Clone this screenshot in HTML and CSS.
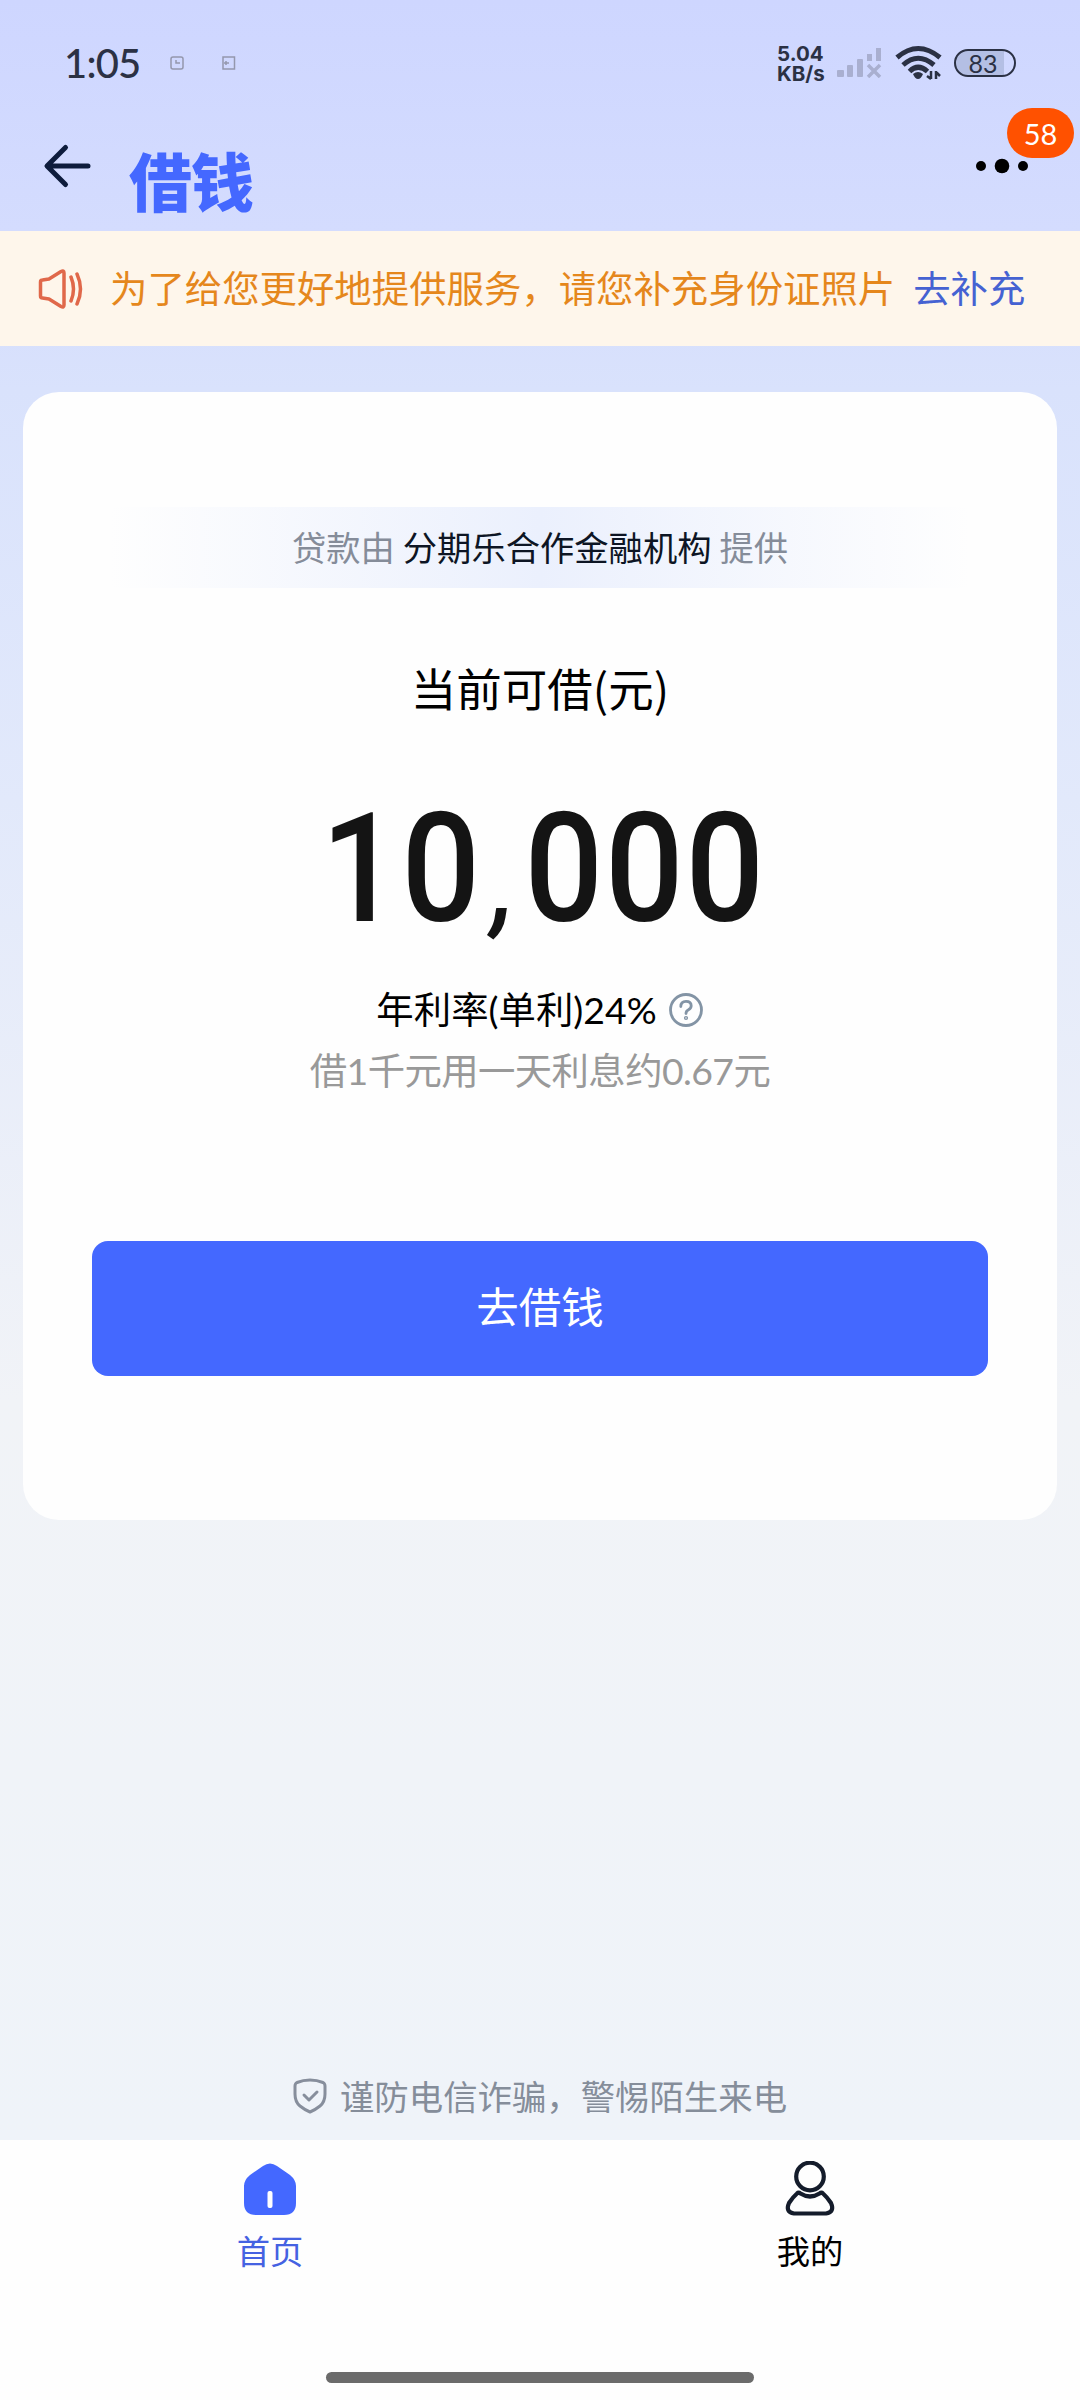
FILE: index.html
```html
<!DOCTYPE html>
<html lang="zh-CN">
<head>
<meta charset="utf-8">
<title>借钱</title>
<link rel="stylesheet" href="styles.css">
</head>
<body>
<div class="screen">
  <div class="statusbar">
    <span class="clock">1:05</span>
    <svg class="tiny" width="14" height="14" viewBox="0 0 14 14" fill="none" stroke="#9497ad" stroke-width="1.5"><rect x="1" y="1" width="12" height="12" rx="2"/><path d="M6 4v3h4"/></svg>
    <svg class="tiny tiny-two" width="14" height="14" viewBox="0 0 14 14" fill="none" stroke="#9497ad" stroke-width="1.5"><path d="M1 1h11.500v12H1zM2 7h5M4 5v4"/></svg>
    <div class="status-right">
      <div class="speed"><span>5.04</span><span>KB/s</span></div>
      <svg class="signal" width="46" height="30" viewBox="0 0 46 30" fill="#a9afd0"><rect y="22" width="7" height="7" rx="1"/><rect x="10" y="17" width="6" height="12" rx="1"/><rect x="20" y="11" width="6" height="18" rx="1"/><rect x="30" y="6" width="5" height="7"/><rect x="39" width="5" height="13"/><path d="M31 17L43 29M43 17L31 29" stroke="#a9afd0" stroke-width="3.500"/></svg>
      <svg class="wifi" width="48" height="36" viewBox="0 0 48 36" fill="none" stroke="#2b3144" stroke-width="5"><path d="M2 12.500Q23 -5.500 45 12.500"/><path d="M8 20Q23 6.500 39 20"/><path d="M14.500 26.500Q23 18 32.500 26.500"/><path d="M18 29Q23 25 28 29Q26 34 23 34Q20 34 18 29Z" fill="#2b3144" stroke="none"/><path d="M36 26v8M32 31l4 3M41 34v-8M41 27l4 4" stroke-width="2.500"/></svg>
      <div class="battery"><span>83</span></div>
    </div>
  </div>
  <header class="navbar">
    <svg class="back" width="50" height="46" viewBox="0 0 50 46" fill="none" stroke="#0e1c3c" stroke-width="5" stroke-linecap="round" stroke-linejoin="round"><path d="M23.500 4.500L5 23L23.500 41.500M6 23H46"/></svg>
    <h1>借钱</h1>
    <div class="more">
      <svg width="54" height="16" viewBox="0 0 54 16"><circle cx="6" cy="8" r="5"/><circle cx="27" cy="8" r="7.300"/><circle cx="48" cy="8" r="5"/></svg>
      <span class="badge">58</span>
    </div>
  </header>
  <div class="notice">
    <svg width="46" height="42" viewBox="0 0 46 42" fill="none" stroke="#e0684a" stroke-width="3.500" stroke-linecap="round" stroke-linejoin="round"><path d="M3.500 14Q3.500 12 5.500 12L12 11L24 3.500Q27 2 27 5V37Q27 40 24 38.500L12 31L5.500 30Q3.500 30 3.500 28Z"/><path d="M34 9Q39 21 34 33M40 6Q47 21 40 36"/></svg>
    <span class="notice-text">为了给您更好地提供服务，请您补充身份证照片</span>
    <a class="notice-link">去补充</a>
  </div>
  <main class="card">
    <p class="provider">贷款由<b>分期乐合作金融机构</b>提供</p>
    <h2>当前可借(元)</h2>
    <div class="amount"><span class="digits">10<i>,</i>000</span></div>
    <div class="rate"><span>年利率(单利)24%</span>
      <svg width="36" height="36" viewBox="0 0 36 36" fill="none" stroke="#8394a5" stroke-width="2.800" stroke-linecap="round"><circle cx="18" cy="18" r="15.500"/><path d="M12.800 14.500Q12.800 9.300 18 9.300Q23.200 9.300 23.200 13.800Q23.200 16.300 20.500 17.700Q18 19 18 21.500"/><circle cx="18" cy="26" r=".7"/></svg>
    </div>
    <p class="interest">借1千元用一天利息约0.67元</p>
    <button class="borrow">去借钱</button>
  </main>
  <p class="safety">
    <svg width="34" height="36" viewBox="0 0 34 36" fill="none" stroke="#878e9c" stroke-width="3" stroke-linecap="round" stroke-linejoin="round"><path d="M17 2Q24 2 30 4.500Q32 5.500 32 8V16Q32 24 27 28Q22 32 17 34Q12 32 7 28Q2 24 2 16V8Q2 5.500 4 4.500Q10 2 17 2Z"/><path d="M11 17L16 22L24 14"/></svg>
    <span>谨防电信诈骗，警惕陌生来电</span>
  </p>
  <nav class="tabs">
    <a class="tab active">
      <svg width="54" height="56" viewBox="0 0 54 56"><path d="M20 5Q27 0 34 5L47 14Q53 19 53 25V42Q53 54 41 54H13Q1 54 1 42V25Q1 19 7 14Z" fill="#4468ff"/><rect x="24.500" y="30" width="5" height="17" rx="2" fill="#fff"/></svg>
      <span>首页</span>
    </a>
    <a class="tab">
      <svg width="54" height="56" viewBox="0 0 54 56" fill="none" stroke="#141c2b" stroke-width="4.200" stroke-linejoin="round"><circle cx="27" cy="15.500" r="13.800"/><path d="M14 32.500Q15.500 31 17.500 32.500Q27 38.500 36.500 32.500Q38.500 31 40 32.500Q44 36 48 42Q52 51 43 52.500H11Q2 51 6 42Q10 36 14 32.500Z"/></svg>
      <span>我的</span>
    </a>
  </nav>
  <div class="homebar"><div class="handle"></div></div>
</div>
</body>
</html>
```
FILE: styles.css
```css
* { box-sizing: border-box; margin: 0; padding: 0; }
body { width: 1080px; font-family: "Noto Sans CJK SC", sans-serif; color: #000; }
.screen {
  width: 1080px; height: 2400px; display: flex; flex-direction: column;
  background: linear-gradient(180deg, #ced6ff 0, #d4dcfe 230px, #d9e2fc 390px, #e2e9fb 800px, #f1f3f7 1400px, #eff3f9 2140px);
}
.statusbar { height: 108px; padding: 18px 64px 0 64px; display: flex; align-items: center; color: #2b3144; }
.clock { font: 500 40px/48px Lato, sans-serif; letter-spacing: -.8px; width: 106px; white-space: nowrap; }
.tiny-two { margin-left: 38px; }
.status-right { margin-left: auto; display: flex; align-items: center; }
.speed { display: flex; flex-direction: column; font: 700 20.500px/20.500px Inter, sans-serif; width: 60px; padding-top: 2px; }
.signal { margin-right: 12px; }
.wifi { margin-right: 11px; }
.battery { width: 62px; height: 28px; border: 2.5px solid #2b3144; border-radius: 14px; background: linear-gradient(90deg, #b4bfe4 83%, transparent 83%); text-align: center; font: 400 25px/24px Lato, sans-serif; padding-right: 4px; }
.navbar { height: 123px; display: flex; padding: 0 51px 0 42px; }
.back { margin-top: 35px; }
.navbar h1 { margin-left: 37px; font-size: 63px; line-height: 80px; font-weight: 900; color: #4468ff; padding-top: 31px; letter-spacing: -1px; }
.more { position: relative; margin-left: auto; padding-top: 50px; height: 80px; }
.more svg { display: block; }
.badge { position: absolute; left: 32px; top: 0; width: 67px; height: 50px; border-radius: 25px; background: #ff5100; color: #fff; font: 400 29px/52px Lato, sans-serif; text-align: center; }
.notice { height: 115px; background: #fef6eb; display: flex; align-items: center; padding-left: 37px; font-size: 37.400px; white-space: nowrap; }
.notice span, .notice a { padding-bottom: 3px; }
.notice-text { margin-left: 27px; color: #e5871c; }
.notice-link { margin-left: 18px; color: #4562d2; }
.card { margin: 46px 23px 0; height: 1128px; border-radius: 36px; background: #fefefe; display: flex; flex-direction: column; align-items: center; padding-top: 115px; }
.provider { width: 860px; height: 81px; line-height: 79px; font-size: 34.300px; text-align: center; color: #858c99; background: linear-gradient(90deg, #fefefe, #ebf0fd 50%, #fefefe); }
.provider b { font-weight: 400; color: #0d1524; margin: 0 8px; }
.card h2 { margin-top: 64px; font-size: 45.500px; line-height: 70px; font-weight: 400; }
.amount { margin-top: 57px; height: 180px; padding-left: 6px; }
.digits { display: block; font: 500 152px/180px Roboto, sans-serif; letter-spacing: 2px; color: #141414; transform: scaleX(.91); }
.digits i { font-size: 115px; line-height: 0; margin: 0 8px 0 12px; }
.rate { margin-top: 21px; height: 60px; display: flex; align-items: center; gap: 11px; font: 400 37.400px/60px Lato, "Noto Sans CJK SC", sans-serif; }
.interest { font: 400 37.400px/62px Lato, "Noto Sans CJK SC", sans-serif; letter-spacing: -.6px; color: #999; }
.borrow { margin-top: 139px; width: 896px; height: 135px; flex: none; border: 0; border-radius: 16px; background: #4468ff; color: #fff; font: 400 42.500px/128px "Noto Sans CJK SC", sans-serif; padding-bottom: 7px; }
.safety { margin-top: auto; height: 88px; display: flex; justify-content: center; align-items: center; gap: 13px; font-size: 34.400px; color: #858d9a; }
.safety span { padding-bottom: 3px; }
.tabs { height: 228px; background: #fefefe; display: flex; padding-top: 21px; }
.tab { flex: 1; display: flex; flex-direction: column; align-items: center; font-size: 33.300px; line-height: 50px; }
.tab span { margin-top: 8px; }
.active { color: #4562e2; }
.homebar { height: 32px; flex: none; background: #fefefe; padding-top: 4px; }
.handle { width: 428px; height: 11px; margin: 0 auto; border-radius: 6px; background: #6b6b6b; }
```
